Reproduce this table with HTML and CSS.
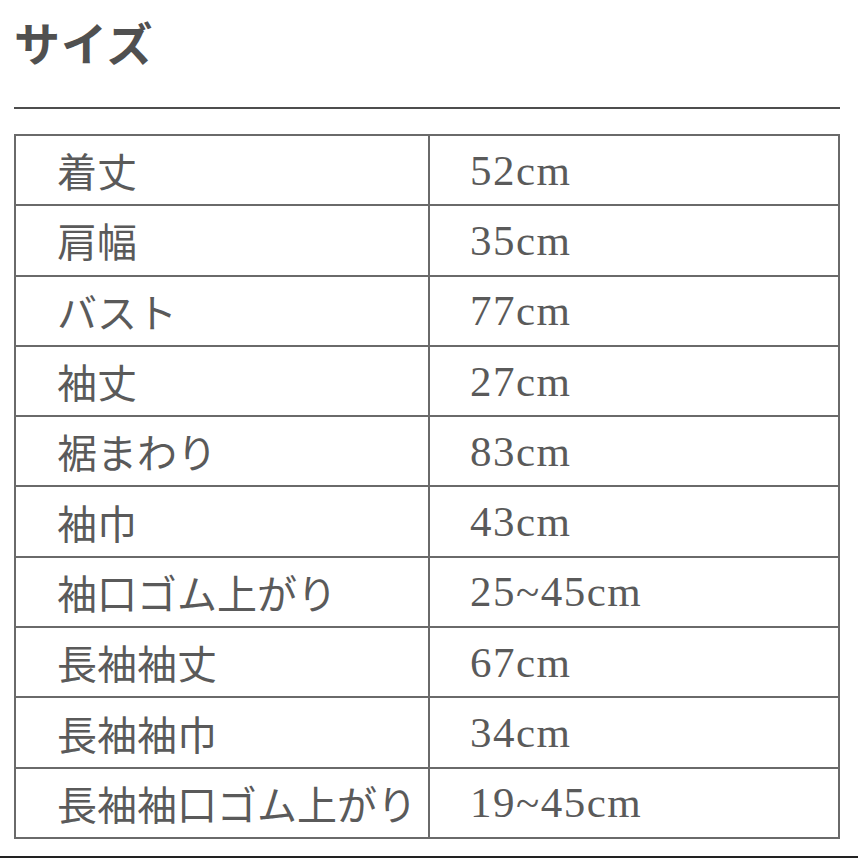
FILE: index.html
```html
<!DOCTYPE html>
<html lang="ja">
<head>
<meta charset="utf-8">
<link rel="stylesheet" href="styles.css">
</head>
<body>
<div class="page">
  <h1 class="title">サイズ</h1>
  <div class="rule"></div>
  <table class="size-table">
    <tr><td class="label">着丈</td><td class="value">52cm</td></tr>
    <tr><td class="label">肩幅</td><td class="value">35cm</td></tr>
    <tr><td class="label">バスト</td><td class="value">77cm</td></tr>
    <tr><td class="label">袖丈</td><td class="value">27cm</td></tr>
    <tr><td class="label">裾まわり</td><td class="value">83cm</td></tr>
    <tr><td class="label">袖巾</td><td class="value">43cm</td></tr>
    <tr><td class="label">袖口ゴム上がり</td><td class="value">25~45cm</td></tr>
    <tr><td class="label">長袖袖丈</td><td class="value">67cm</td></tr>
    <tr><td class="label">長袖袖巾</td><td class="value">34cm</td></tr>
    <tr><td class="label">長袖袖口ゴム上がり</td><td class="value">19~45cm</td></tr>
  </table>
</div>
<div class="bottom-rule"></div>
</body>
</html>
```
FILE: styles.css
```css
html, body {
  margin: 0;
  padding: 0;
  background: #fff;
  width: 858px;
  height: 858px;
  overflow: hidden;
}
.page {
  padding: 0 18px 0 14px;
}
.title {
  margin: 0;
  padding-top: 14px;
  height: 107px;
  box-sizing: border-box;
  font-family: "Noto Sans CJK JP", sans-serif;
  font-weight: 700;
  font-size: 46px;
  line-height: 54px;
  color: #505050;
  letter-spacing: 1px;
}
.rule {
  height: 2px;
  background: #4d4d4d;
  margin-bottom: 25px;
}
.size-table {
  width: 826px;
  border-collapse: collapse;
  table-layout: fixed;
}
.size-table td {
  border: 2px solid #6a6a6a;
  height: 68.3px;
  padding: 0;
  vertical-align: middle;
}
.label {
  width: 371px;
  padding-left: 41px !important;
  font-family: "Noto Sans CJK JP", sans-serif;
  font-size: 40px;
  color: #5a5a5a;
  white-space: nowrap;
  letter-spacing: 0;
}
.value {
  padding-left: 40px !important;
  font-family: "Liberation Serif", serif;
  font-size: 43px;
  letter-spacing: 1.5px;
  color: #5a5a5a;
}
.bottom-rule {
  position: absolute;
  left: 0;
  right: 0;
  top: 856px;
  height: 2px;
  background: #222;
}
```
